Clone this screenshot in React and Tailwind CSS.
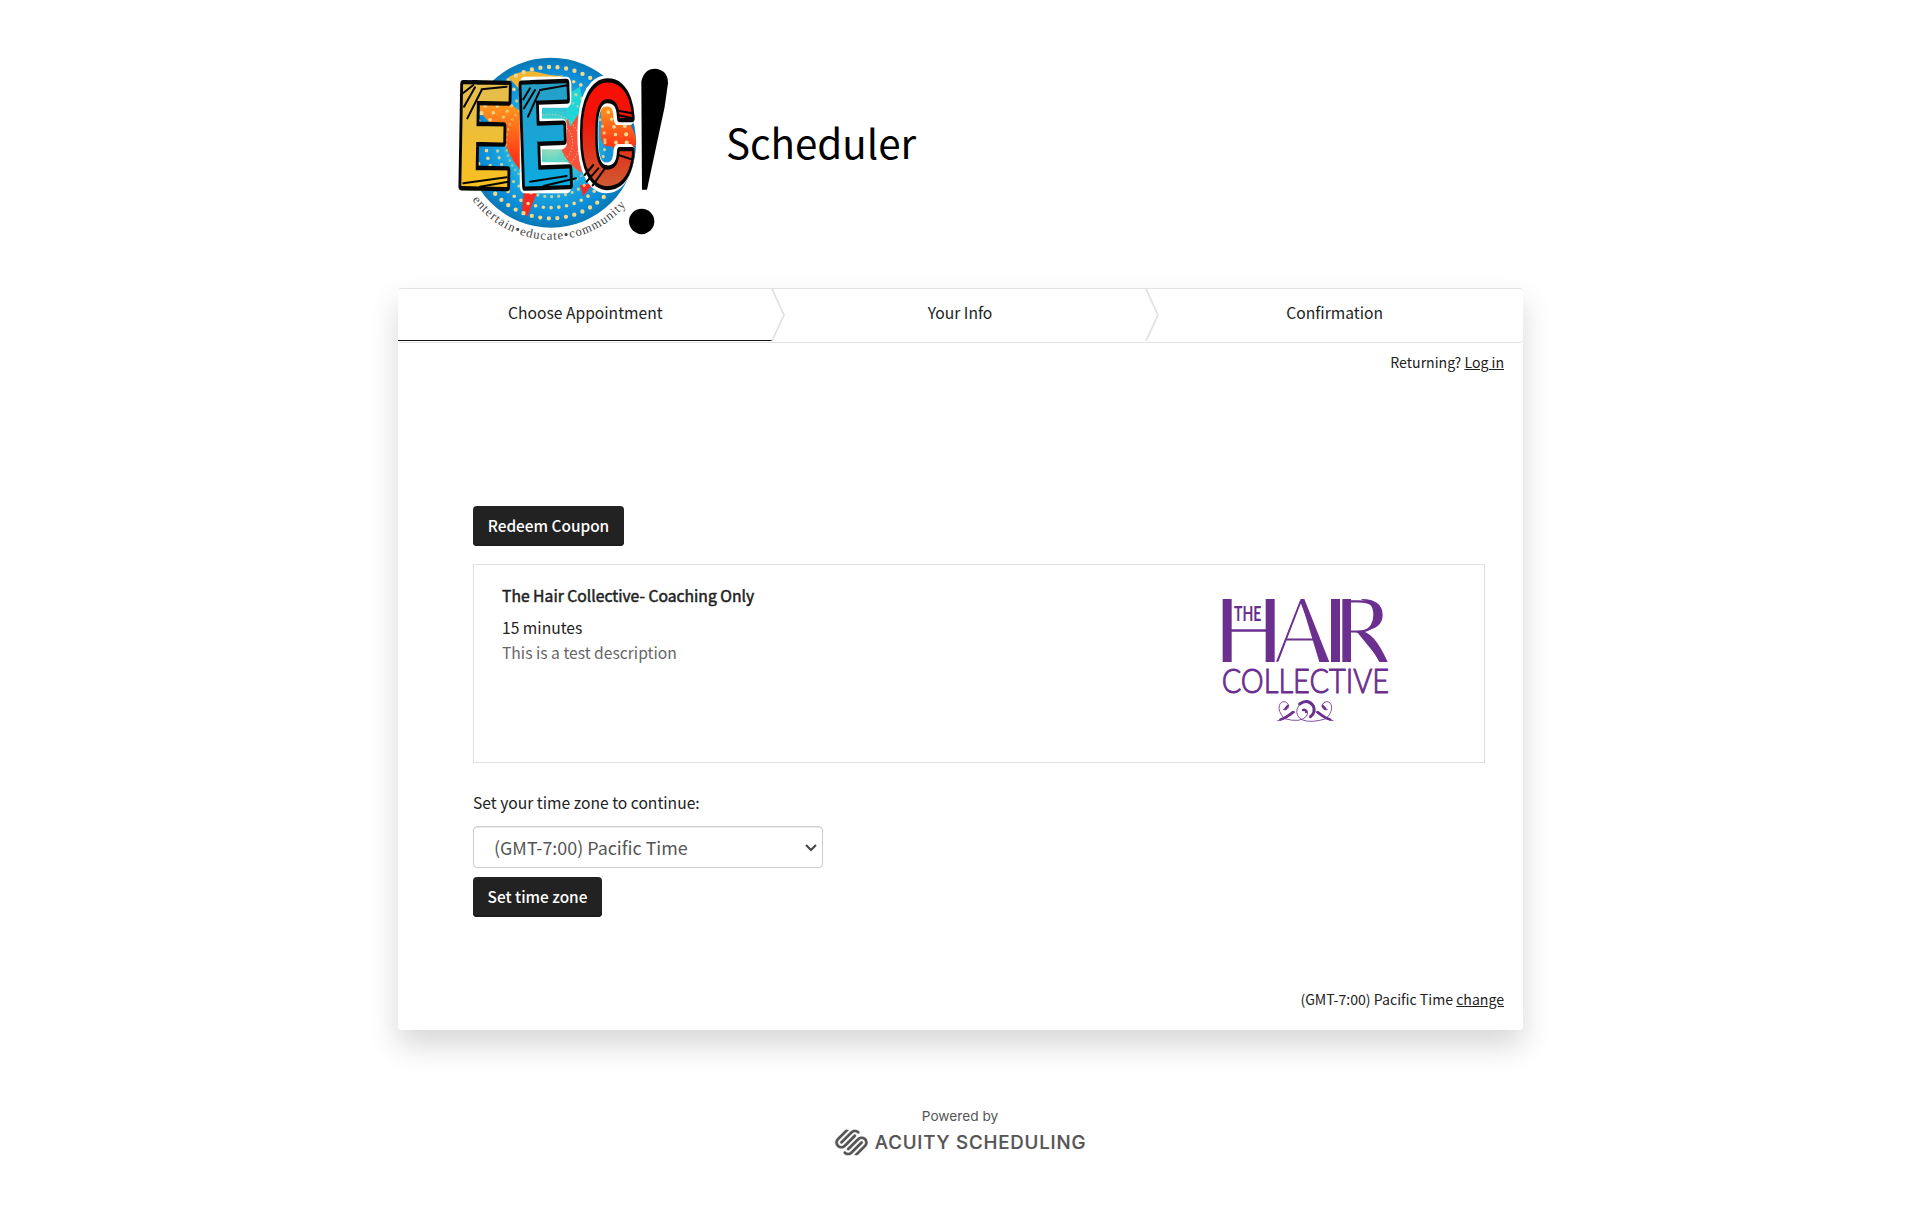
import React from "react";
import { SiSquarespace } from "react-icons/si";

const PURPLE = "#6a2f8f";

function EecLogo() {
  return (
    <svg viewBox="0 0 720 630" className="block h-[210px] w-[240px] shrink-0">
      <defs>
        <radialGradient id="globe" cx="333" cy="308" r="256" gradientUnits="userSpaceOnUse">
          <stop offset="0" stopColor="#b9dfae" />
          <stop offset="0.3" stopColor="#3fd3d0" />
          <stop offset="0.6" stopColor="#19a5e0" />
          <stop offset="0.85" stopColor="#0b8ad6" />
          <stop offset="1" stopColor="#0a78b4" />
        </radialGradient>
        <linearGradient id="land" x1="0" y1="0" x2="0" y2="1">
          <stop offset="0" stopColor="#ff9d1e" />
          <stop offset="1" stopColor="#ff2416" />
        </linearGradient>
        <linearGradient id="gold" x1="0" y1="0" x2="0" y2="1">
          <stop offset="0" stopColor="#dfbd5b" />
          <stop offset="1" stopColor="#ffc010" />
        </linearGradient>
        <linearGradient id="sky" x1="0" y1="0" x2="0" y2="1">
          <stop offset="0" stopColor="#2f9cc0" />
          <stop offset="1" stopColor="#02aeea" />
        </linearGradient>
        <linearGradient id="fire" x1="0" y1="0" x2="0" y2="1">
          <stop offset="0.1" stopColor="#ff0d04" />
          <stop offset="0.4" stopColor="#f01408" />
          <stop offset="0.8" stopColor="#cf5a33" />
        </linearGradient>
        <path id="motto" d="M97 479 A293 293 0 0 0 558 495" />
        <clipPath id="disc"><circle cx="333" cy="308" r="255" /></clipPath>
      </defs>
      <circle cx="333" cy="308" r="255" fill="url(#globe)" />
      <g clipPath="url(#disc)">
        <path d="M205 112 Q250 85 300 98 T370 105 L350 128 L240 150 Z" fill="#f2b632" />
        <path d="M120 195 Q200 170 240 215 L245 300 Q250 360 240 390 Q200 340 190 290 Q150 250 120 215 Z" fill="url(#land)" />
        <path d="M380 240 Q430 200 430 250 L425 400 Q380 370 365 330 Z" fill="#f9513a" />
        <path d="M480 190 Q560 200 590 300 Q580 360 520 330 Q470 320 485 250 Z" fill="url(#land)" />
        <path d="M252 455 L290 460 L262 530 L246 510 Z M420 435 L462 430 L430 468 Z" fill="#f52b22" />
        <path d="M495 320 Q530 310 525 350 Q510 420 490 400 Z" fill="#1593d5" />
        <path d="M370 170 L420 140 L430 200 L390 260 Z" fill="#21d6d6" />
      </g>
      <g fill="none" stroke="#eed98c" strokeLinecap="round">
        <circle cx="333" cy="308" r="227" strokeWidth="13" strokeDasharray="0 25.9" />
        <circle cx="333" cy="308" r="195" strokeWidth="11" strokeDasharray="0 23.5" />
        <circle cx="333" cy="308" r="162" strokeWidth="10" strokeDasharray="0 21" opacity="0.8" />
        <circle cx="333" cy="308" r="135" strokeWidth="8" strokeDasharray="0 16" opacity="0.5" />
        <circle cx="333" cy="308" r="85" strokeWidth="4" strokeDasharray="0 9" opacity="0.7" />
        <circle cx="333" cy="308" r="65" strokeWidth="4" strokeDasharray="0 9" opacity="0.7" />
      </g>
      <g fontFamily="Roboto, sans-serif" fontWeight="700" fontSize="430" strokeLinejoin="round">
        <g stroke="#ffffff" strokeWidth="44" fill="#ffffff">
          <text transform="translate(236 438) scale(0.62 1)">E</text>
          <text transform="translate(415 436) scale(0.58 0.98)">C</text>
        </g>
        <g stroke="#060606" strokeWidth="26" paintOrder="stroke">
          <text transform="translate(46 438) rotate(1) scale(0.67 1)" fill="url(#gold)">E</text>
          <text transform="translate(237 440) rotate(-2) scale(0.66 1)" fill="url(#sky)">E</text>
          <text transform="translate(417 436) scale(0.595 0.98)" fill="url(#fire)">C</text>
        </g>
      </g>
      <g stroke="#060606" strokeWidth="6" strokeLinecap="round">
        <path d="M72 200 L105 142 M82 235 L125 150 M62 165 L100 135 M125 148 L200 140 M70 430 L200 412 M120 440 L205 425" />
        <path d="M252 205 L285 150 M264 230 L298 155 M250 178 L270 145 M300 150 L382 136 M270 425 L380 408 M310 438 L408 415" />
        <path d="M440 425 L475 385 M458 436 L500 378 M434 405 L460 375 M535 212 L576 220 M535 226 L576 234 M535 345 L575 358" />
      </g>
      <text transform="translate(605 578) rotate(4.6)" textAnchor="middle" fontFamily="Lato, sans-serif" fontWeight="100" fontSize="650" fill="#000">!</text>
      <path d="M604 125Q612 86 646 86Q684 90 684 130L674 200L621 449L606 449Z" fill="#000" />
      <ellipse cx="605" cy="544" rx="38" ry="38" fill="#000" />
      <text fontFamily="'Liberation Serif', serif" fontSize="38" fill="#444">
        <textPath href="#motto" textLength="530">entertain•educate•community</textPath>
      </text>
    </svg>
  );
}

function HairLogo() {
  return (
    <svg viewBox="0 0 510 390" className="block h-[130px] w-[170px]" fill={PURPLE}>
      <g fontFamily="Lato, sans-serif" fontWeight="100" fontSize="262" stroke={PURPLE} strokeWidth="4">
        <text transform="translate(-16 196) scale(1.03 0.99)">H</text>
        <text transform="translate(166 196) scale(0.92 0.99)">A</text>
        <text transform="translate(316 196) scale(1 0.99)">I</text>
        <text transform="translate(346 196) scale(0.96 0.99)">R</text>
      </g>
      <rect x="8" y="9" width="27" height="189" />
      <rect x="137" y="9" width="27" height="189" />
      <rect x="333" y="9" width="27" height="189" />
      <rect x="367" y="9" width="26" height="189" />
      <path d="M241 9H253L328 198H298Z" />
      <path d="M425 9Q488 10 488 57Q488 98 430 105Q460 92 460 57Q460 18 425 13Z" />
      <path d="M418 104Q462 104 503 198H478Q446 140 418 108Z" />
      <text x="42" y="76" fontFamily="Lato, sans-serif" fontWeight="700" fontSize="60" textLength="82" lengthAdjust="spacingAndGlyphs">THE</text>
      <text x="5" y="292" fontFamily="Lato, sans-serif" fontWeight="300" fontSize="98" textLength="502" lengthAdjust="spacingAndGlyphs" stroke={PURPLE} strokeWidth="3">COLLECTIVE</text>
      <g transform="translate(13 0)" fill="none" stroke={PURPLE} strokeWidth="2.5" strokeLinecap="round">
        <path d="M160 374Q190 370 212 347Q185 365 180 368Q160 345 165 328Q170 314 184 318Q198 326 190 338Q184 344 177 341" />
        <path d="M326 374Q296 370 274 347Q301 365 306 368Q326 345 321 328Q316 314 302 318Q288 326 296 338Q302 344 309 341" />
        <path d="M180 368Q230 382 247 360Q256 342 240 339M306 368Q260 382 235 372Q214 362 218 340Q226 316 245 317" />
        <path d="M168 371Q185 365 206 348M318 371Q301 365 280 348" strokeWidth="7" />
        <path d="M226 324Q250 306 267 330Q275 350 258 362" strokeWidth="9" />
        <path d="M236 342Q246 340 245 348M183 338L190 330M303 338L296 330" strokeWidth="7" />
      </g>
    </svg>
  );
}

function Step({ label, active, last }) {
  return (
    <div className={active ? "relative flex-1 border-b border-[#151515] text-center" : "relative flex-1 border-b border-transparent text-center"}>
      <div className="pt-3 text-[15.65px] leading-6">{label}</div>
      {!last && (
        <svg viewBox="0 0 14 53" className="absolute top-0 -right-[12px] z-10 h-[53px] w-[14px]" fill="none">
          <path d="M1 0L13 26L1 52" stroke="#e0e0e0" strokeWidth="1.7" />
        </svg>
      )}
    </div>
  );
}

function DarkButton({ children, className }) {
  return (
    <button className={"block h-10 rounded-[4px] bg-[#222] pb-[3px] text-[15.4px] leading-6 font-medium text-white shadow-[inset_0_-2px_0_#1d1d1d] " + className}>
      {children}
    </button>
  );
}

export default function App() {
  return (
    <div className="min-h-[1218px] bg-white font-['Noto_Sans_CJK_SC',sans-serif] text-[#222]">
      <div className="ml-[398px] w-[1125px]">
        <header className="flex h-[288px] pt-10 pl-[42px]">
          <EecLogo />
          <h1 className="mt-[72px] ml-[46px] text-[40.3px] leading-[60px] text-black">Scheduler</h1>
        </header>

        <main className="h-[742px] rounded-[4px] bg-white shadow-[0_15px_30px_rgba(0,0,0,0.16)]">
          <nav className="flex h-[55px] rounded-[4px] border-y border-[#e2e2e2] pr-px pb-px">
            <Step label="Choose Appointment" active />
            <Step label="Your Info" />
            <Step label="Confirmation" last />
          </nav>

          <div className="pt-[7px] pr-[19px] text-right text-[14.1px] leading-6">
            Returning? <a className="underline">Log in</a>
          </div>

          <div className="mt-[132px] ml-[75px] w-[1012px]">
            <DarkButton className="w-[151px]">Redeem Coupon</DarkButton>

            <section className="mt-[18px] flex h-[199px] justify-between border border-[#e0e0e0] pl-7">
              <div className="pt-[19px] text-[15.65px]">
                <h2 className="text-[15.7px] leading-6 [-webkit-text-stroke:0.5px_#222]">The Hair Collective- Coaching Only</h2>
                <p className="mt-2 leading-6">15 minutes</p>
                <p className="mt-px leading-6 text-[#666]">This is a test description</p>
              </div>
              <div className="pt-[31px] pr-[94px]">
                <HairLogo />
              </div>
            </section>

            <p className="mt-7 text-[15.65px] leading-6">Set your time zone to continue:</p>
            <div className="mt-[11px] flex h-[42px] w-[350px] items-center justify-between rounded-[4px] border border-[#ccc] pr-[5px] pl-5 text-[17.9px] leading-6 text-[#555] shadow-[inset_0_1px_1px_rgba(0,0,0,0.075)]">
              <span className="pb-px">(GMT-7:00) Pacific Time</span>
              <svg viewBox="0 0 12 8" className="mt-px h-2 w-3" fill="none">
                <path d="M1 1L6 6L11 1" stroke="#444" strokeWidth="2" />
              </svg>
            </div>
            <DarkButton className="mt-[9px] w-[129px]">Set time zone</DarkButton>
          </div>

          <div className="mt-[70px] pr-[19px] text-right text-[14.1px] leading-6">
            (GMT-7:00) Pacific Time <a className="underline">change</a>
          </div>
        </main>
      </div>

      <footer className="flex flex-col items-center pt-[76px] font-['Inter',sans-serif] text-[#555]">
        <div className="text-[13.7px] leading-5">Powered by</div>
        <div className="flex h-8 items-center gap-[7px] pl-px">
          <SiSquarespace className="size-[33px]" stroke="#fff" strokeWidth="0.4" />
          <span className="pt-[2px] text-[18.7px] leading-6 font-medium tracking-[0.8px] [-webkit-text-stroke:0.2px_#555]">ACUITY SCHEDULING</span>
        </div>
      </footer>
    </div>
  );
}
